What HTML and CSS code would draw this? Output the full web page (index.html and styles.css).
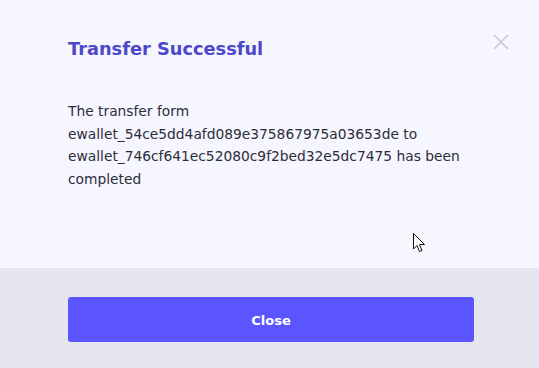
FILE: index.html
```html
<!DOCTYPE html>
<html lang="en">
  <head>
    <meta charset="UTF-8" />
    <meta name="viewport" content="width=device-width, initial-scale=1.0" />
    <title>Transfer Successful</title>
    <link rel="stylesheet" href="styles.css">
  </head>
  <body>
    <section class="modal">
      <div class="modal__main">
        <h2 class="modal__title">Transfer Successful</h2>
        <button class="modal__x" aria-label="Close">
          <svg width="16" height="16" viewBox="0 0 16 16">
            <path d="M1 1 L15 15 M15 1 L1 15" stroke="#c3c3d3" stroke-width="1.4" fill="none" />
          </svg>
        </button>
        <p class="modal__text">
          The transfer form<br />
          ewallet_54ce5dd4afd089e375867975a03653de to
          ewallet_746cf641ec52080c9f2bed32e5dc7475 has been completed
        </p>
        <!-- mouse pointer from the screenshot -->
        <svg class="cursor" width="13" height="20" viewBox="0 0 13 20">
          <path d="M0.5 0.5 L0.5 16 L4 12.5 L6.5 18.5 L9 17.5 L6.5 11.5 L11.5 11.5 Z" fill="#fff" stroke="#111" stroke-width="1" />
        </svg>
      </div>
      <div class="modal__footer">
        <button class="btn">Close</button>
      </div>
    </section>
  </body>
</html>
```

FILE: styles.css
```css
html,
body {
  margin: 0;
  font-family: "DejaVu Sans", sans-serif;
  background: #f5f6fe;
}

.modal {
  width: 539px;
  height: 368px;
}

.modal__main {
  position: relative;
  height: 268px;
  box-sizing: border-box;
  padding: 37px 65px 0 68px;
  background: #f5f6fe;
}

.modal__title {
  margin: 0;
  font-size: 17.8px;
  font-weight: 600;
  line-height: 24px;
  color: #4f47c9;
}

.modal__x {
  position: absolute;
  top: 34px;
  right: 30px;
  padding: 0;
  border: 0;
  background: none;
}

.modal__text {
  margin: 39px 0 0;
  width: 400px;
  font-size: 13.8px;
  line-height: 22.5px;
  color: #2d2d3a;
}

.cursor {
  position: absolute;
  left: 413px;
  top: 233px;
}

.modal__footer {
  height: 100px;
  box-sizing: border-box;
  padding: 29px 65px 0 68px;
  background: #e5e5f0;
}

.btn {
  display: block;
  width: 100%;
  height: 45px;
  padding: 2px 0 0;
  border: 0;
  border-radius: 3px;
  background: #5a55ff;
  color: #fff;
  font-family: "DejaVu Sans", sans-serif;
  font-size: 13px;
  font-weight: bold;
}
```
